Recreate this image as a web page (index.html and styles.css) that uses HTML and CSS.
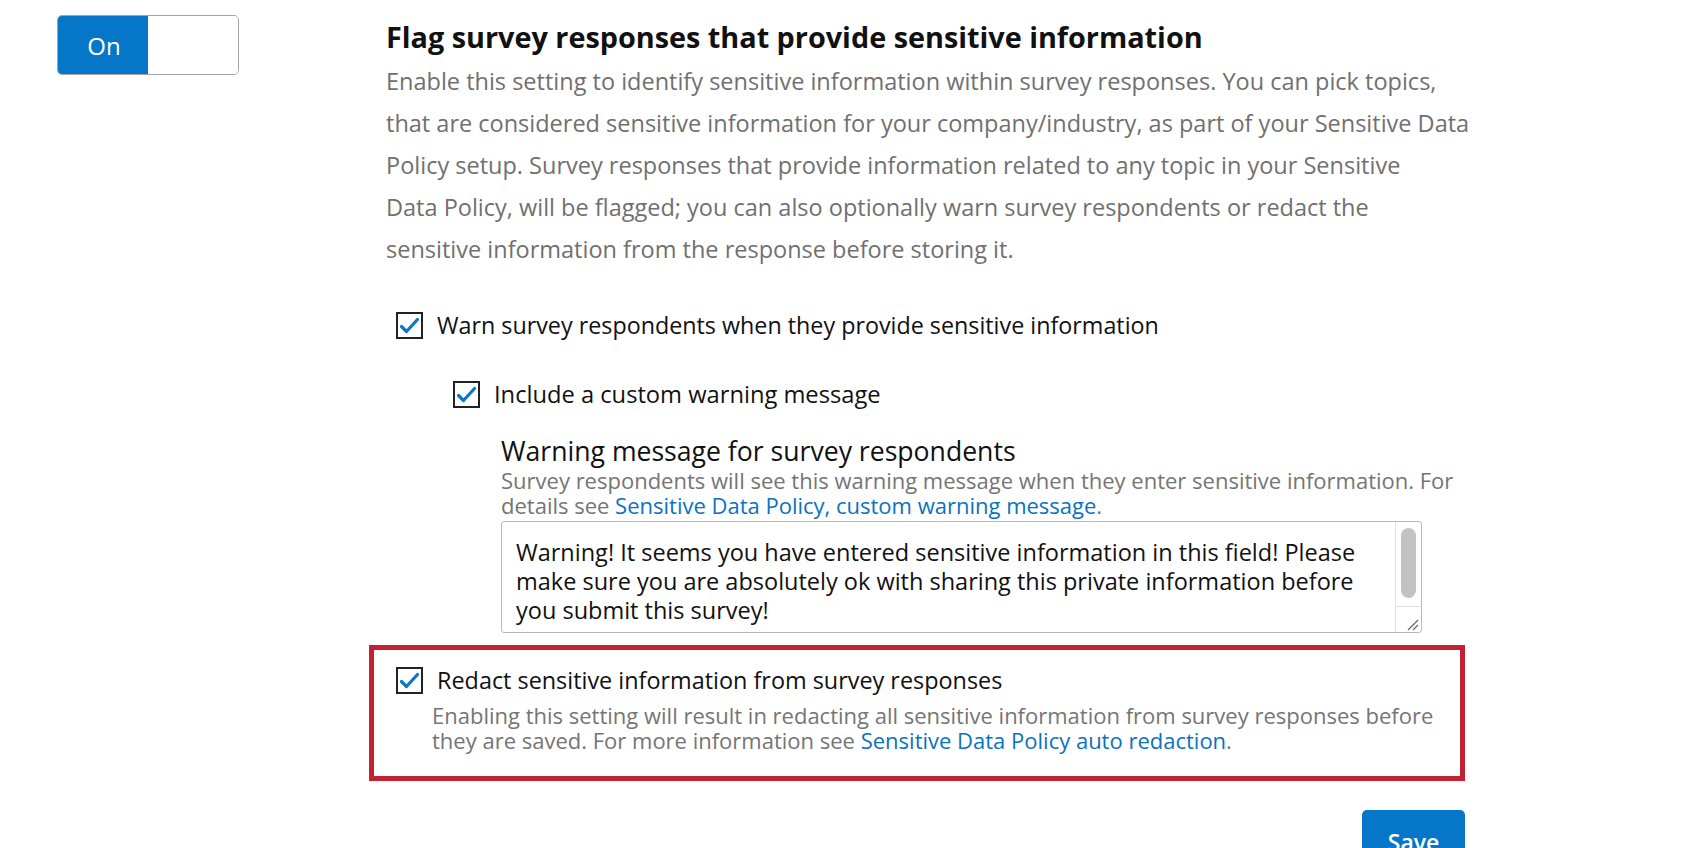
FILE: index.html
```html
<!DOCTYPE html>
<html lang="en">
<head>
<meta charset="utf-8">
<title>Sensitive Data Policy</title>
<link rel="stylesheet" href="styles.css">
</head>
<body>
<div class="page">
  <div class="side">
    <div class="toggle">
      <span class="toggle-on">On</span>
      <span class="toggle-off"></span>
    </div>
  </div>
  <div class="main">
    <h1 class="title">Flag survey responses that provide sensitive information</h1>
    <p class="intro">Enable this setting to identify sensitive information within survey responses. You can pick topics, that are considered sensitive information for your company/industry, as part of your Sensitive Data Policy setup. Survey responses that provide information related to any topic in your Sensitive<br>Data Policy, will be flagged; you can also optionally warn survey respondents or redact the<br>sensitive information from the response before storing it.</p>

    <div class="options">
      <label class="check-row row-warn">
        <span class="box"><svg viewBox="0 0 27 27" width="27" height="27"><path d="M5.5 14.5 L10.5 19.5 L21.5 7.5" fill="none" stroke="#0b77c6" stroke-width="3.2" stroke-linecap="round" stroke-linejoin="round"/></svg></span>
        <span class="check-label">Warn survey respondents when they provide sensitive information</span>
      </label>

      <div class="nested">
        <label class="check-row row-include">
          <span class="box"><svg viewBox="0 0 27 27" width="27" height="27"><path d="M5.5 14.5 L10.5 19.5 L21.5 7.5" fill="none" stroke="#0b77c6" stroke-width="3.2" stroke-linecap="round" stroke-linejoin="round"/></svg></span>
          <span class="check-label">Include a custom warning message</span>
        </label>

        <div class="message-block">
          <div class="msg-title">Warning message for survey respondents</div>
          <div class="msg-desc">Survey respondents will see this warning message when they enter sensitive information. For details see <a class="link" href="#">Sensitive Data Policy, custom warning message</a>.</div>
          <div class="textarea">
            <div class="textarea-text">Warning! It seems you have entered sensitive information in this field! Please make sure you are absolutely ok with sharing this private information before you submit this survey!</div>
            <div class="scrollbar">
              <div class="track"><div class="thumb"></div></div>
              <div class="corner"><svg viewBox="0 0 26 26" width="26" height="26"><path d="M12 23 L22 13 M17 23 L22 18" stroke="#666" stroke-width="1.2" fill="none"/></svg></div>
            </div>
          </div>
        </div>
      </div>

      <div class="highlight">
        <label class="check-row row-redact">
          <span class="box"><svg viewBox="0 0 27 27" width="27" height="27"><path d="M5.5 14.5 L10.5 19.5 L21.5 7.5" fill="none" stroke="#0b77c6" stroke-width="3.2" stroke-linecap="round" stroke-linejoin="round"/></svg></span>
          <span class="check-label">Redact sensitive information from survey responses</span>
        </label>
        <div class="redact-desc">Enabling this setting will result in redacting all sensitive information from survey responses before they are saved. For more information see <a class="link" href="#">Sensitive Data Policy auto redaction</a>.</div>
      </div>

      <div class="actions">
        <button class="save" type="button">Save</button>
      </div>
    </div>
  </div>
</div>
</body>
</html>
```

FILE: styles.css
```css
* { box-sizing: border-box; }
html, body { margin: 0; padding: 0; background: #fff; }
body {
  font-family: "Open Sans", "Liberation Sans", sans-serif;
  color: #1a1a1a;
  overflow: hidden;
  height: 848px;
}
.page {
  display: flex;
  align-items: flex-start;
}
.side {
  width: 386px;
  padding: 15px 0 0 57px;
  flex: none;
}
.toggle {
  display: flex;
  width: 182px;
  height: 60px;
  border: 1.5px solid #a3a3a3;
  border-radius: 5px;
  overflow: hidden;
}
.toggle-on {
  width: 91px;
  background: #0677c8;
  color: #fff;
  display: flex;
  align-items: center;
  justify-content: center;
  font-size: 24px;
  padding-left: 4px;
  margin: -1.5px 0 -1.5px -1.5px;
  border-radius: 5px 0 0 5px;
}
.toggle-off { flex: 1; background: #fff; }

.main {
  width: 1100px;
  flex: none;
}
.title {
  margin: 19px 0 0 0;
  font-size: 28.8px;
  line-height: 36px;
  font-weight: 700;
  color: #111;
  white-space: nowrap;
}
.intro {
  margin: 5px 0 0 0;
  font-size: 23.5px;
  line-height: 42px;
  color: #707070;
  width: 1090px;
}
.options { margin-left: -17px; }
.check-row {
  display: flex;
  align-items: center;
  gap: 14px;
  cursor: pointer;
}
.box {
  width: 27px;
  height: 27px;
  border: 2px solid #222;
  display: block;
  flex: none;
  position: relative;
}
.box svg { position: absolute; left: -2px; top: -2px; }
.check-label { font-size: 23.4px; color: #111; white-space: nowrap; }
.row-warn { margin: 40px 0 0 27px; height: 30px; }
.row-warn .check-label { font-size: 23.3px; }
.nested { padding-left: 84px; }
.row-include { margin-top: 39px; height: 30px; }
.row-include .check-label { font-size: 23.7px; }
.message-block { padding-left: 48px; margin-top: 25px; }
.msg-title { font-size: 26.6px; line-height: 34px; color: #111; white-space: nowrap; }
.msg-desc {
  font-size: 22px;
  line-height: 25px;
  color: #757575;
  width: 960px;
}
.link { color: #0a72c2; text-decoration: none; }
.textarea {
  margin-top: 3px;
  width: 921px;
  height: 112px;
  border: 1px solid #b9b9b9;
  border-radius: 3px;
  display: flex;
}
.textarea-text {
  flex: 1;
  padding: 16px 19px 0 14px;
  font-size: 23.5px;
  line-height: 29px;
  color: #111;
}
.scrollbar {
  width: 26px;
  border-left: 1px solid #e2e2e2;
  display: flex;
  flex-direction: column;
}
.track { flex: 1; padding: 6px 5px 0 5px; }
.thumb {
  height: 70px;
  background: #c2c2c2;
  border-radius: 8px;
}
.corner {
  height: 26px;
  border-top: 1px solid #e2e2e2;
}
.corner svg { display: block; }
.highlight {
  margin-top: 12px;
  width: 1096px;
  border: 5px solid #c12332;
  padding: 15px 0 23px 22px;
}
.row-redact { height: 30px; }
.redact-desc {
  margin: 8px 0 0 36px;
  font-size: 22px;
  line-height: 25px;
  color: #757575;
  width: 1005px;
}
.actions {
  display: flex;
  justify-content: flex-end;
  width: 1096px;
  padding-top: 29px;
}
.save {
  width: 103px;
  height: 56px;
  background: #0677c8;
  color: #fff;
  border: none;
  border-radius: 5px;
  font-family: inherit;
  font-size: 23px;
  font-weight: 600;
  padding-top: 8px;
}
```
